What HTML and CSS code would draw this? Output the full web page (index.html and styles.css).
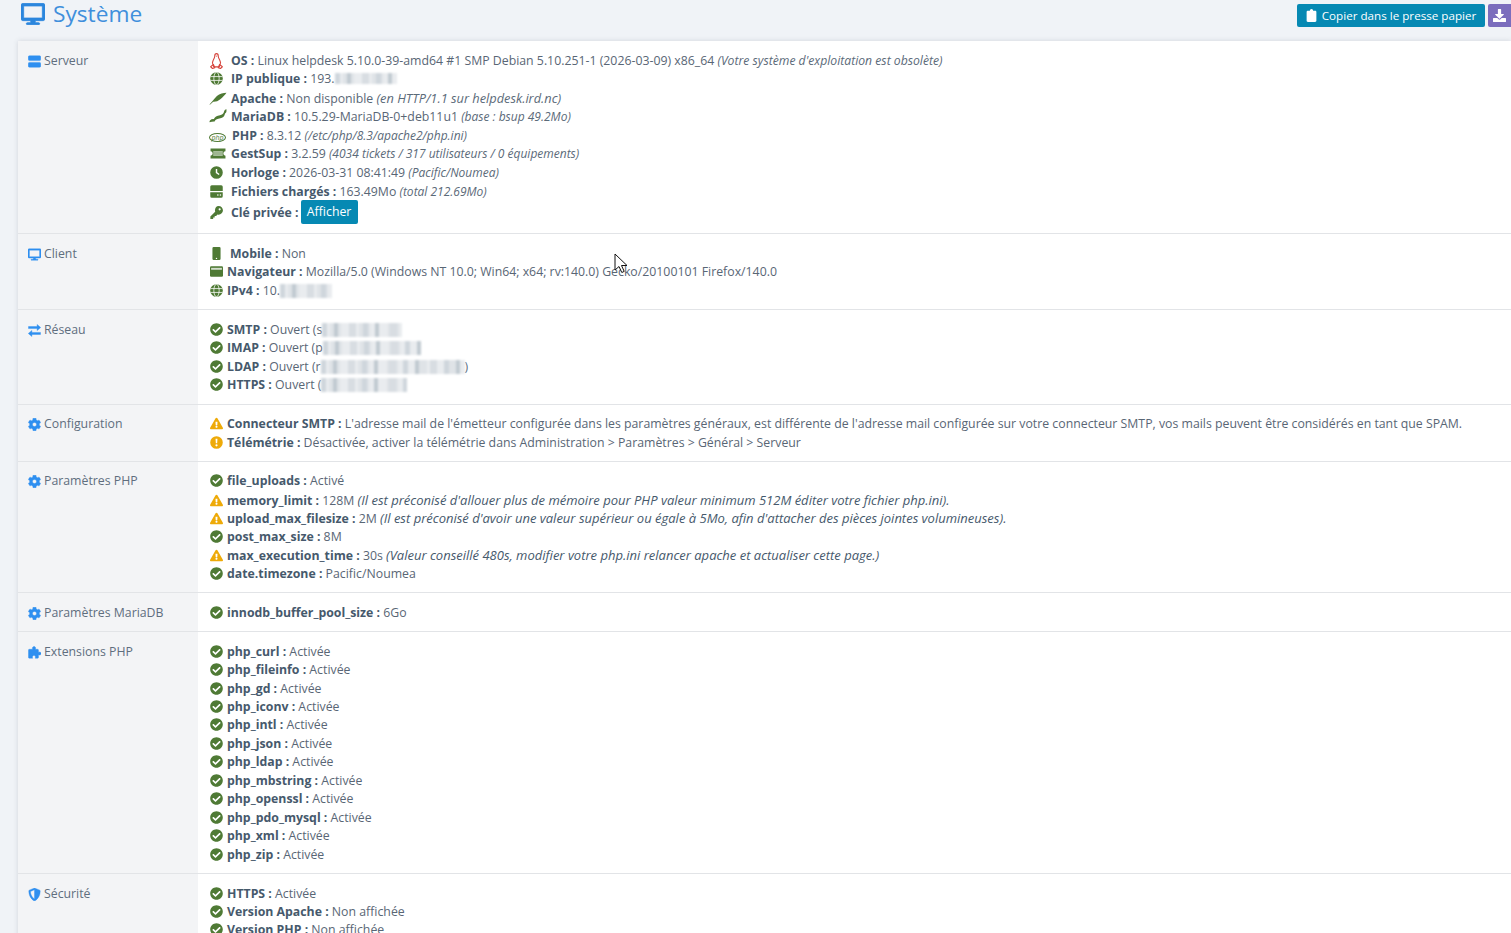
FILE: index.html
```html
<!DOCTYPE html>
<html lang="fr">
<head>
<meta charset="utf-8">
<title>Système</title>
<link rel="stylesheet" href="styles.css">
</head>
<body>
<svg class="sprite" xmlns="http://www.w3.org/2000/svg">
  <symbol id="i-desktop" viewBox="0 0 576 512"><path d="M528 0H48C21.5 0 0 21.5 0 48v320c0 26.5 21.5 48 48 48h192l-16 48h-72c-13.3 0-24 10.7-24 24s10.7 24 24 24h272c13.3 0 24-10.7 24-24s-10.7-24-24-24h-72l-16-48h192c26.5 0 48-21.5 48-48V48c0-26.5-21.5-48-48-48zm-16 352H64V64h448v288z"/></symbol>
  <symbol id="i-check" viewBox="0 0 512 512"><path d="M504 256c0 136.967-111.033 248-248 248S8 392.967 8 256 119.033 8 256 8s248 111.033 248 248zM227.314 387.314l184-184c6.248-6.248 6.248-16.379 0-22.627l-22.627-22.627c-6.248-6.249-16.379-6.249-22.628 0L216 308.118l-70.059-70.059c-6.248-6.248-16.379-6.248-22.628 0l-22.627 22.627c-6.248 6.248-6.248 16.379 0 22.627l104 104c6.249 6.249 16.379 6.249 22.628.001z"/></symbol>
  <symbol id="i-warn" viewBox="0 0 576 512"><path d="M569.517 440.013C587.975 472.007 564.806 512 527.94 512H48.054c-36.937 0-59.999-40.055-41.577-71.987L246.423 23.985c18.467-32.009 64.72-31.951 83.154 0l239.94 416.028zM288 354c-25.405 0-46 20.595-46 46s20.595 46 46 46 46-20.595 46-46-20.595-46-46-46zm-43.673-165.346l7.418 136c.347 6.364 5.609 11.346 11.982 11.346h48.546c6.373 0 11.635-4.982 11.982-11.346l7.418-136c.375-6.874-5.098-12.654-11.982-12.654h-63.383c-6.884 0-12.356 5.78-11.981 12.654z"/></symbol>
  <symbol id="i-info" viewBox="0 0 512 512"><path fill-rule="evenodd" d="M256 8a248 248 0 1 0 0 496 248 248 0 0 0 0-496zm-38 104h76l-12 170h-52zm38 210a44 44 0 1 1 0 88 44 44 0 0 1 0-88z"/></symbol>
  <symbol id="i-cog" viewBox="0 0 512 512"><path d="M487.4 315.7l-42.6-24.6c4.3-23.2 4.3-47 0-70.2l42.6-24.6c4.9-2.8 7.1-8.6 5.5-14-11.1-35.6-30-67.8-54.7-94.6-3.8-4.1-10-5.1-14.8-2.3L380.8 110c-17.9-15.4-38.5-27.3-60.8-35.1V25.8c0-5.6-3.9-10.5-9.4-11.7-36.7-8.2-74.3-7.8-109.2 0-5.5 1.2-9.4 6.1-9.4 11.7V75c-22.2 7.9-42.8 19.8-60.8 35.1L88.7 85.5c-4.9-2.8-11-1.9-14.8 2.3-24.7 26.7-43.6 58.9-54.7 94.6-1.7 5.4.6 11.2 5.5 14L67.3 221c-4.3 23.2-4.3 47 0 70.2l-42.6 24.6c-4.9 2.8-7.1 8.6-5.5 14 11.1 35.6 30 67.8 54.7 94.6 3.8 4.1 10 5.1 14.8 2.3l42.6-24.6c17.9 15.4 38.5 27.3 60.8 35.1v49.2c0 5.6 3.9 10.5 9.4 11.7 36.7 8.2 74.3 7.8 109.2 0 5.5-1.2 9.4-6.1 9.4-11.7v-49.2c22.2-7.9 42.8-19.8 60.8-35.1l42.6 24.6c4.9 2.8 11 1.9 14.8-2.3 24.7-26.7 43.6-58.9 54.7-94.6 1.5-5.5-.7-11.3-5.6-14.1zM256 336c-44.1 0-80-35.9-80-80s35.9-80 80-80 80 35.9 80 80-35.9 80-80 80z"/></symbol>
  <symbol id="i-server" viewBox="0 0 512 512"><path d="M60 30h392a50 50 0 0 1 50 50v90a50 50 0 0 1-50 50H60a50 50 0 0 1-50-50V80a50 50 0 0 1 50-50zm0 262h392a50 50 0 0 1 50 50v90a50 50 0 0 1-50 50H60a50 50 0 0 1-50-50v-90a50 50 0 0 1 50-50z"/></symbol>
  <symbol id="i-drive" viewBox="0 0 512 512"><path d="M70 10h372a60 60 0 0 1 60 60v170H10V70a60 60 0 0 1 60-60z"/><path fill-rule="evenodd" d="M10 290h492v150a60 60 0 0 1-60 60H70a60 60 0 0 1-60-60zm300 70a32 32 0 1 0 0 64 32 32 0 0 0 0-64zm100 0a32 32 0 1 0 0 64 32 32 0 0 0 0-64z"/></symbol>
  <symbol id="i-exchange" viewBox="0 0 512 512"><path d="M360 20l140 120-140 120v-80H20v-80h340zM152 252v80h340v80H152v80L12 372z"/></symbol>
  <symbol id="i-puzzle" viewBox="0 0 512 512"><path d="M210 30c40-20 92 6 92 56 0 18-10 30-14 44h90a34 34 0 0 1 34 34v84c14-4 26-14 44-14 50 0 76 52 56 92-14 30-60 44-100 18v102a34 34 0 0 1-34 34h-96c4-14 14-26 14-44 0-50-52-76-92-56-30 14-44 60-18 100H52a34 34 0 0 1-34-34V164a34 34 0 0 1 34-34h132c-26-40-4-86 26-100z"/></symbol>
  <symbol id="i-shield" viewBox="0 0 512 512"><path fill-rule="evenodd" d="M256 0L52 84c-12 5-20 16-20 30 0 190 92 320 206 390 11 7 25 7 36 0 114-70 206-200 206-390 0-14-8-25-20-30zm0 66v372c-84-56-154-160-160-298z"/></symbol>
  <symbol id="i-globe" viewBox="0 0 512 512"><circle cx="256" cy="256" r="248"/><g fill="none" stroke="#fff" stroke-width="30"><ellipse cx="256" cy="256" rx="105" ry="245"/><path d="M20 180h472M20 332h472"/></g></symbol>
  <symbol id="i-clock" viewBox="0 0 512 512"><path fill-rule="evenodd" d="M256 8a248 248 0 1 0 0 496 248 248 0 0 0 0-496zm-28 110h56v128l92 66-32 46-116-84z"/></symbol>
  <symbol id="i-key" viewBox="0 0 512 512"><path fill-rule="evenodd" d="M340 2c92 0 170 78 170 170s-78 170-170 170c-18 0-34-3-50-8l-46 62h-60v60h-60v60H14v-100l190-190c-5-16-8-34-8-54C196 80 248 2 340 2zm40 88a42 42 0 1 0 0 84 42 42 0 0 0 0-84z"/></symbol>
  <symbol id="i-mobile" viewBox="0 0 320 512"><path fill-rule="evenodd" d="M48 0h224a48 48 0 0 1 48 48v416a48 48 0 0 1-48 48H48a48 48 0 0 1-48-48V48A48 48 0 0 1 48 0zm112 420a28 28 0 1 0 0 56 28 28 0 0 0 0-56z"/></symbol>
  <symbol id="i-window" viewBox="0 0 512 512"><path d="M48 48h416a48 48 0 0 1 48 48v320a48 48 0 0 1-48 48H48a48 48 0 0 1-48-48V96a48 48 0 0 1 48-48z"/><rect x="44" y="112" width="424" height="76" fill="#fff" opacity=".75"/></symbol>
  <symbol id="i-ticket" viewBox="0 0 600 400"><path fill-rule="evenodd" d="M20 10h560v110a80 80 0 0 0 0 160v110H20V280a80 80 0 0 0 0-160zm110 100v180h340V110z"/><rect x="130" y="110" width="340" height="180" opacity=".55"/></symbol>
  <symbol id="i-feather" viewBox="0 0 640 512"><path d="M630 60C520 60 380 90 280 180 220 235 170 300 120 370L10 490l14 12 120-110c90 6 180-20 260-90 90-80 170-160 226-242z"/></symbol>
  <symbol id="i-seal" viewBox="0 0 640 512"><path d="M630 10c-40 6-70 30-86 74-16 46-20 90-78 120-44 22-100 26-150 44-70 26-120 66-150 124-50-8-100 10-140 46-14 14-20 40-16 70 60-24 120-34 186-32 30-76 110-100 210-116 90-14 140-60 160-136 10-36 24-60 50-76 14-20 16-70 14-118z"/></symbol>
  <symbol id="i-tux" viewBox="0 0 448 512"><g fill="none" stroke="currentColor" stroke-width="34" stroke-linejoin="round"><path d="M224 20c48 0 58 48 58 88 0 60 60 110 72 210-20 60-40 90-40 126H134c0-36-20-66-40-126 12-100 72-150 72-210 0-40 10-88 58-88z"/><path d="M36 440l90-72 44 104-74 24zM412 440l-90-72-44 104 74 24z"/></g><path d="M190 90l34 30 34-30z" fill="currentColor"/></symbol>
  <symbol id="i-clip" viewBox="0 0 384 512"><path d="M384 112v352c0 26.500-21.500 48-48 48H48c-26.500 0-48-21.500-48-48V112c0-26.500 21.500-48 48-48h80c0-35.300 28.700-64 64-64s64 28.700 64 64h80c26.500 0 48 21.500 48 48z"/></symbol>
  <symbol id="i-down" viewBox="0 0 512 512"><path d="M216 0h80c13 0 24 11 24 24v168h88c18 0 27 21 14 34L270 378a20 20 0 0 1-28 0L90 226c-13-13-4-34 14-34h88V24c0-13 11-24 24-24zM512 376v112c0 13-11 24-24 24H24c-13 0-24-11-24-24V376c0-13 11-24 24-24h147l49 49a51 51 0 0 0 72 0l49-49h147c13 0 24 11 24 24z"/></symbol>
</svg>

<main class="page">
  <header class="head">
    <h1 class="title"><svg class="title-ico"><use href="#i-desktop"/></svg>Système</h1>
    <div class="actions">
      <button class="btn btn-teal btn-copy"><svg class="btn-ico btn-ico-clip"><use href="#i-clip"/></svg>Copier dans le presse papier</button>
      <button class="btn btn-purple"><svg class="btn-ico"><use href="#i-down"/></svg></button>
    </div>
  </header>

  <section class="table">
    <div class="row">
      <div class="label"><svg class="lico"><use href="#i-server"/></svg>Serveur</div>
      <div class="cell cell-server">
        <div class="ln"><svg class="ic big red"><use href="#i-tux"/></svg><b>OS :</b> Linux helpdesk 5.10.0-39-amd64 #1 SMP Debian 5.10.251-1 (2026-03-09) x86_64 <i class="note">(Votre système d'exploitation est obsolète)</i></div>
        <div class="ln"><svg class="ic w21 green"><use href="#i-globe"/></svg><b>IP publique :</b> 193.<span class="blur b62"></span></div>
        <div class="ln"><svg class="ic wide green"><use href="#i-feather"/></svg><b>Apache :</b> Non disponible <i class="mid">(en HTTP/1.1 sur helpdesk.ird.nc)</i></div>
        <div class="ln"><svg class="ic wide green"><use href="#i-seal"/></svg><b>MariaDB :</b> 10.5.29-MariaDB-0+deb11u1 <i>(base : bsup 49.2Mo)</i></div>
        <div class="ln"><span class="php">php</span><b>PHP :</b> 8.3.12 <i>(/etc/php/8.3/apache2/php.ini)</i></div>
        <div class="ln"><svg class="ic tick green"><use href="#i-ticket"/></svg><b>GestSup :</b> 3.2.59 <i>(4034 tickets / 317 utilisateurs / 0 équipements)</i></div>
        <div class="ln"><svg class="ic w21 green"><use href="#i-clock"/></svg><b>Horloge :</b> 2026-03-31 08:41:49 <i>(Pacific/Noumea)</i></div>
        <div class="ln"><svg class="ic w21 green"><use href="#i-drive"/></svg><b>Fichiers chargés :</b> 163.49Mo <i>(total 212.69Mo)</i></div>
        <div class="ln"><svg class="ic w21 green"><use href="#i-key"/></svg><b>Clé privée :</b> <button class="btn btn-teal btn-small">Afficher</button></div>
      </div>
    </div>

    <div class="row">
      <div class="label"><svg class="lico"><use href="#i-desktop"/></svg>Client</div>
      <div class="cell">
        <div class="ln"><svg class="ic w20 green"><use href="#i-mobile"/></svg><b>Mobile :</b> Non</div>
        <div class="ln"><svg class="ic green"><use href="#i-window"/></svg><b>Navigateur :</b> Mozilla/5.0 (Windows NT 10.0; Win64; x64; rv:140.0) Gecko/20100101 Firefox/140.0</div>
        <div class="ln"><svg class="ic green"><use href="#i-globe"/></svg><b>IPv4 :</b> 10.<span class="blur b52"></span></div>
      </div>
    </div>

    <div class="row">
      <div class="label"><svg class="lico"><use href="#i-exchange"/></svg>Réseau</div>
      <div class="cell">
        <div class="ln"><svg class="ic green"><use href="#i-check"/></svg><b>SMTP :</b> Ouvert (s<span class="blur b80"></span></div>
        <div class="ln"><svg class="ic green"><use href="#i-check"/></svg><b>IMAP :</b> Ouvert (p<span class="blur b98"></span></div>
        <div class="ln"><svg class="ic green"><use href="#i-check"/></svg><b>LDAP :</b> Ouvert (r<span class="blur b144"></span>)</div>
        <div class="ln"><svg class="ic green"><use href="#i-check"/></svg><b>HTTPS :</b> Ouvert (<span class="blur b86"></span></div>
      </div>
    </div>

    <div class="row">
      <div class="label"><svg class="lico"><use href="#i-cog"/></svg>Configuration</div>
      <div class="cell">
        <div class="ln"><svg class="ic amber"><use href="#i-warn"/></svg><b>Connecteur SMTP :</b> L'adresse mail de l'émetteur configurée dans les paramètres généraux, est différente de l'adresse mail configurée sur votre connecteur SMTP, vos mails peuvent être considérés en tant que SPAM.</div>
        <div class="ln"><svg class="ic amber"><use href="#i-info"/></svg><b>Télémétrie :</b> Désactivée, activer la télémétrie dans Administration &gt; Paramètres &gt; Général &gt; Serveur</div>
      </div>
    </div>

    <div class="row">
      <div class="label"><svg class="lico"><use href="#i-cog"/></svg>Paramètres PHP</div>
      <div class="cell">
        <div class="ln"><svg class="ic green"><use href="#i-check"/></svg><b>file_uploads :</b> Activé</div>
        <div class="ln"><svg class="ic amber"><use href="#i-warn"/></svg><b>memory_limit :</b> 128M <i class="strong">(Il est préconisé d'allouer plus de mémoire pour PHP valeur minimum 512M éditer votre fichier php.ini).</i></div>
        <div class="ln"><svg class="ic amber"><use href="#i-warn"/></svg><b>upload_max_filesize :</b> 2M <i class="strong">(Il est préconisé d'avoir une valeur supérieur ou égale à 5Mo, afin d'attacher des pièces jointes volumineuses).</i></div>
        <div class="ln"><svg class="ic green"><use href="#i-check"/></svg><b>post_max_size :</b> 8M</div>
        <div class="ln"><svg class="ic amber"><use href="#i-warn"/></svg><b>max_execution_time :</b> 30s <i class="strong">(Valeur conseillé 480s, modifier votre php.ini relancer apache et actualiser cette page.)</i></div>
        <div class="ln"><svg class="ic green"><use href="#i-check"/></svg><b>date.timezone :</b> Pacific/Noumea</div>
      </div>
    </div>

    <div class="row">
      <div class="label"><svg class="lico"><use href="#i-cog"/></svg>Paramètres MariaDB</div>
      <div class="cell">
        <div class="ln"><svg class="ic green"><use href="#i-check"/></svg><b>innodb_buffer_pool_size :</b> 6Go</div>
      </div>
    </div>

    <div class="row">
      <div class="label"><svg class="lico"><use href="#i-puzzle"/></svg>Extensions PHP</div>
      <div class="cell">
        <div class="ln"><svg class="ic green"><use href="#i-check"/></svg><b>php_curl :</b> Activée</div>
        <div class="ln"><svg class="ic green"><use href="#i-check"/></svg><b>php_fileinfo :</b> Activée</div>
        <div class="ln"><svg class="ic green"><use href="#i-check"/></svg><b>php_gd :</b> Activée</div>
        <div class="ln"><svg class="ic green"><use href="#i-check"/></svg><b>php_iconv :</b> Activée</div>
        <div class="ln"><svg class="ic green"><use href="#i-check"/></svg><b>php_intl :</b> Activée</div>
        <div class="ln"><svg class="ic green"><use href="#i-check"/></svg><b>php_json :</b> Activée</div>
        <div class="ln"><svg class="ic green"><use href="#i-check"/></svg><b>php_ldap :</b> Activée</div>
        <div class="ln"><svg class="ic green"><use href="#i-check"/></svg><b>php_mbstring :</b> Activée</div>
        <div class="ln"><svg class="ic green"><use href="#i-check"/></svg><b>php_openssl :</b> Activée</div>
        <div class="ln"><svg class="ic green"><use href="#i-check"/></svg><b>php_pdo_mysql :</b> Activée</div>
        <div class="ln"><svg class="ic green"><use href="#i-check"/></svg><b>php_xml :</b> Activée</div>
        <div class="ln"><svg class="ic green"><use href="#i-check"/></svg><b>php_zip :</b> Activée</div>
      </div>
    </div>

    <div class="row">
      <div class="label"><svg class="lico"><use href="#i-shield"/></svg>Sécurité</div>
      <div class="cell">
        <div class="ln"><svg class="ic green"><use href="#i-check"/></svg><b>HTTPS :</b> Activée</div>
        <div class="ln"><svg class="ic green"><use href="#i-check"/></svg><b>Version Apache :</b> Non affichée</div>
        <div class="ln"><svg class="ic green"><use href="#i-check"/></svg><b>Version PHP :</b> Non affichée</div>
      </div>
    </div>
  </section>
</main>

<svg class="cursor" viewBox="0 0 14 21" xmlns="http://www.w3.org/2000/svg"><path d="M1 1v16l4-3.500 2.800 6 2.400-1.100-2.700-5.900H13z" fill="#fff" stroke="#111" stroke-width="1"/></svg>
</body>
</html>
```
FILE: styles.css
```css
* { box-sizing: border-box; }
html, body { height: 100%; }
body {
  margin: 0;
  height: 933px;
  overflow: hidden;
  background: #f0f3f7;
  font-family: "Open Sans", "Noto Sans", sans-serif;
  font-size: 12.3px;
  line-height: 18.46px;
  color: #596675;
  position: relative;
}
.sprite { display: none; }
.page { padding-left: 18px; }

.head {
  height: 41px;
  display: flex;
  justify-content: space-between;
  align-items: flex-start;
}
.title {
  margin: 0 0 0 3px;
  font-size: 22.7px;
  line-height: 27px;
  font-weight: 400;
  color: #3f8fdc;
  display: flex;
  align-items: center;
  gap: 8px;
}
.title-ico { width: 24px; height: 22px; fill: #2b86dd; stroke: #2b86dd; stroke-width: 18; }
.actions { display: flex; gap: 3px; padding-top: 4px; }

.btn {
  border: 0;
  border-radius: 2px;
  color: #fff;
  font: inherit;
  line-height: 18px;
  padding: 0;
  display: inline-flex;
  align-items: center;
  justify-content: center;
  white-space: nowrap;
  cursor: pointer;
}
.btn-teal { background: #0689b3; height: 23px; width: 188px; gap: 5px; }
.btn-copy { font-size: 11.65px; }
.btn-purple { background: #7b6dbd; height: 23px; width: 23px; border-radius: 2px 0 0 2px; }
.btn-ico { width: 13px; height: 13px; fill: #fff; }
.btn-ico-clip { width: 11px; }
.btn-small { width: 57px; height: 24px; vertical-align: middle; margin: -3px 0 0 -1px; }

.table {
  background: #fff;
  box-shadow: 0 0 5px rgba(70, 85, 100, .18);
}
.row {
  display: grid;
  grid-template-columns: 180px 1fr;
  border-bottom: 1px solid #e2e4e7;
}
.label {
  background: #f3f4f6;
  padding: 10.5px 0 0 10px;
  color: #5f6e7e;
  display: flex;
  align-items: flex-start;
}
.lico { width: 13px; height: 13px; fill: #2e8ff0; stroke: #2e8ff0; stroke-width: 16; margin: 3px 3px 0 0; flex: none; }
.cell { padding: 10.5px 12px 9px; min-width: 0; white-space: nowrap; }
.cell-server { padding-bottom: 0; }
.cell-server .ln { height: 18.8px; }
.cell-server .ln:last-child { height: 32.5px; line-height: 24px; margin-top: -1px; }

.ln { height: 18.46px; display: block; }
b { font-weight: 700; color: #46596c; }
i { font-size: 12px; color: #5b6a79; }
i.note { font-size: 12.2px; }
i.mid { font-size: 12.8px; }
i.strong { font-size: 13px; color: #46596c; }

.ic {
  width: 13px;
  height: 13px;
  margin-right: 4px;
  vertical-align: -2px;
}
.w20 { margin-right: 7px; }
.w21 { margin-right: 8px; }
.big { width: 15px; height: 16px; margin: 0 7px 0 -1px; vertical-align: -4px; }
.wide { width: 18px; height: 14px; margin: 0 4px 0 -1px; vertical-align: -2px; }
.tick { width: 16px; height: 11px; margin: 0 5px 0 0; vertical-align: -1px; }
.green { fill: #4f7a35; color: #4f7a35; }
.amber { fill: #eeaa08; }
.red { fill: #d6453d; color: #d6453d; }

.php {
  display: inline-block;
  width: 17px;
  height: 9px;
  margin: 0 6px 0 -1px;
  border: 1px solid #4f7a35;
  border-radius: 50%;
  color: #4f7a35;
  font-size: 7px;
  line-height: 7px;
  font-style: italic;
  text-align: center;
  vertical-align: 0;
}

.blur {
  display: inline-block;
  height: 14px;
  vertical-align: -3px;
  filter: blur(1px);
  background-color: #e9ecef;
  background-image:
    repeating-linear-gradient(90deg, #cfd6dc 0 5px, transparent 5px 12px, #c1cad1 12px 16px, transparent 16px 27px, #d8dde2 27px 34px, transparent 34px 41px),
    repeating-linear-gradient(90deg, transparent 0 8px, #dfe3e7 8px 19px, transparent 19px 29px);
}
.b62 { width: 62px; height: 11px; vertical-align: -1px; }
.b52 { width: 52px; }
.b80 { width: 80px; }
.b98 { width: 98px; }
.b144 { width: 144px; }
.b86 { width: 86px; }

.cursor {
  position: absolute;
  left: 614px;
  top: 253px;
  width: 14px;
  height: 21px;
}
```
